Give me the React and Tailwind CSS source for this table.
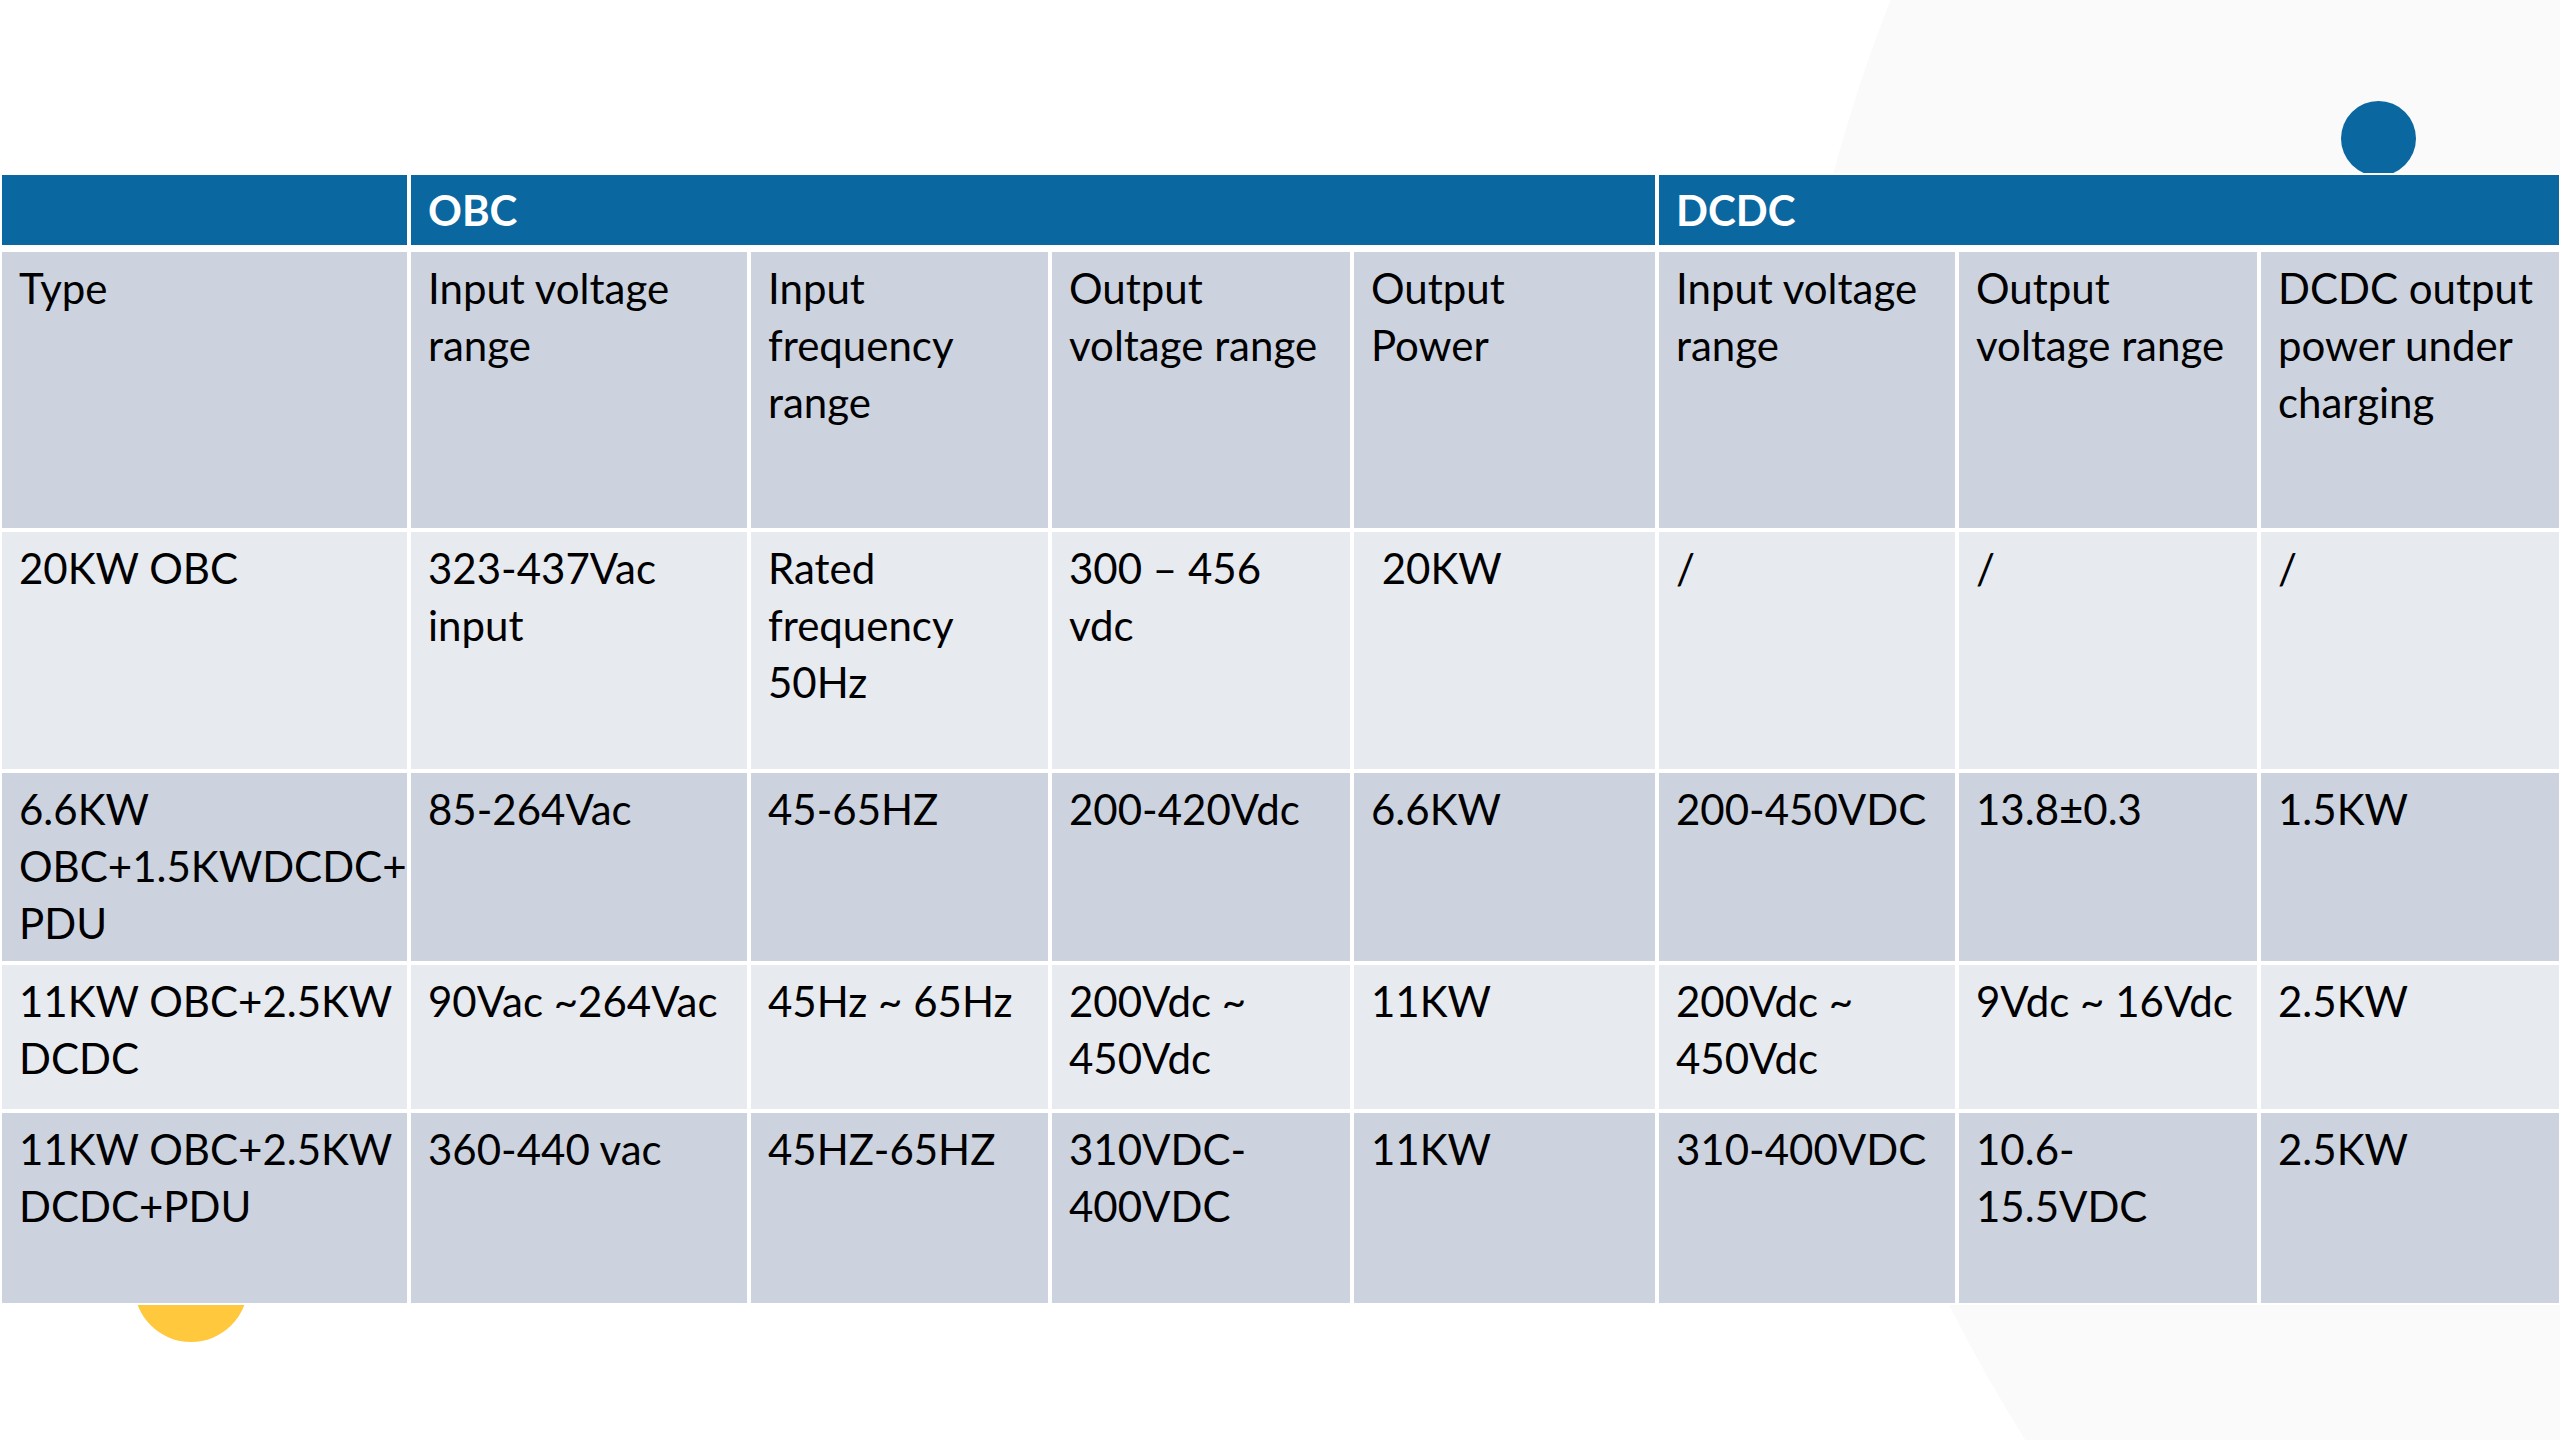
const cols = 'grid-cols-[405px_336px_297px_298px_301px_296px_298px_298px]';

const headRow = [
  ['Type'],
  ['Input voltage', 'range'],
  ['Input', 'frequency', 'range'],
  ['Output', 'voltage range'],
  ['Output', 'Power'],
  ['Input voltage', 'range'],
  ['Output', 'voltage range'],
  ['DCDC output', 'power under', 'charging'],
];

const rows = [
  {
    h: 'h-[237px]',
    bg: 'bg-[#e7eaef]',
    cells: [
      ['20KW OBC'],
      ['323-437Vac', 'input'],
      ['Rated', 'frequency', '50Hz'],
      ['300 – 456', 'vdc'],
      ['\u00a020KW'],
      ['/'],
      ['/'],
      ['/'],
    ],
  },
  {
    h: 'h-[188px]',
    bg: 'bg-[#ccd3df]',
    cells: [
      ['6.6KW', 'OBC+1.5KWDCDC+', 'PDU'],
      ['85-264Vac'],
      ['45-65HZ'],
      ['200-420Vdc'],
      ['6.6KW'],
      ['200-450VDC'],
      ['13.8±0.3'],
      ['1.5KW'],
    ],
  },
  {
    h: 'h-[144px]',
    bg: 'bg-[#e7eaef]',
    cells: [
      ['11KW OBC+2.5KW', 'DCDC'],
      ['90Vac ~264Vac'],
      ['45Hz ~ 65Hz'],
      ['200Vdc ~', '450Vdc'],
      ['11KW'],
      ['200Vdc ~', '450Vdc'],
      ['9Vdc ~ 16Vdc'],
      ['2.5KW'],
    ],
  },
  {
    h: 'h-[190px]',
    bg: 'bg-[#ccd3df]',
    cells: [
      ['11KW OBC+2.5KW', 'DCDC+PDU'],
      ['360-440 vac'],
      ['45HZ-65HZ'],
      ['310VDC-', '400VDC'],
      ['11KW'],
      ['310-400VDC'],
      ['10.6-', '15.5VDC'],
      ['2.5KW'],
    ],
  },
];

function Cell({ lines, className }) {
  return (
    <div className={`pl-[17px] pt-[8px] whitespace-pre text-black ${className}`}>
      {lines.map((l, i) => (
        <div key={i}>{l}</div>
      ))}
    </div>
  );
}

export default function App() {
  return (
    <div
      className="relative w-[2560px] h-[1440px] overflow-hidden bg-white text-[42px] leading-[57px]"
      style={{ fontFamily: 'Lato, "Open Sans", sans-serif' }}
    >
      {/* background decorations */}
      <div className="absolute left-[1779px] top-[-1013px] w-[3200px] h-[3200px] rounded-full bg-[#fafafa]" />
      <div className="absolute left-[2341px] top-[101px] w-[75px] h-[75px] rounded-full bg-[#0a67a0]" />
      <div className="absolute left-[134px] top-[1228px] w-[114px] h-[114px] rounded-full bg-[#ffc83d]" />

      <div className="relative pt-[173px]">
        <div className="bg-white pt-[2px] pb-[2px] pl-[2px] pr-[1px]">
          {/* group header */}
          <div className={`grid ${cols} gap-x-[4px] mb-[7px]`}>
            <div className="h-[70px] bg-[#0a67a0]" />
            <div className="col-span-4 h-[70px] bg-[#0a67a0] pl-[17px] pt-[7px] font-bold text-white">OBC</div>
            <div className="col-span-3 h-[70px] bg-[#0a67a0] pl-[17px] pt-[7px] font-bold text-white">DCDC</div>
          </div>

          <div className={`grid ${cols} gap-[4px]`}>
            {headRow.map((c, i) => (
              <Cell key={i} lines={c} className="h-[276px] bg-[#ccd3df]" />
            ))}
            {rows.map((r, ri) =>
              r.cells.map((c, i) => <Cell key={`${ri}-${i}`} lines={c} className={`${r.h} ${r.bg}`} />)
            )}
          </div>
        </div>
      </div>
    </div>
  );
}
